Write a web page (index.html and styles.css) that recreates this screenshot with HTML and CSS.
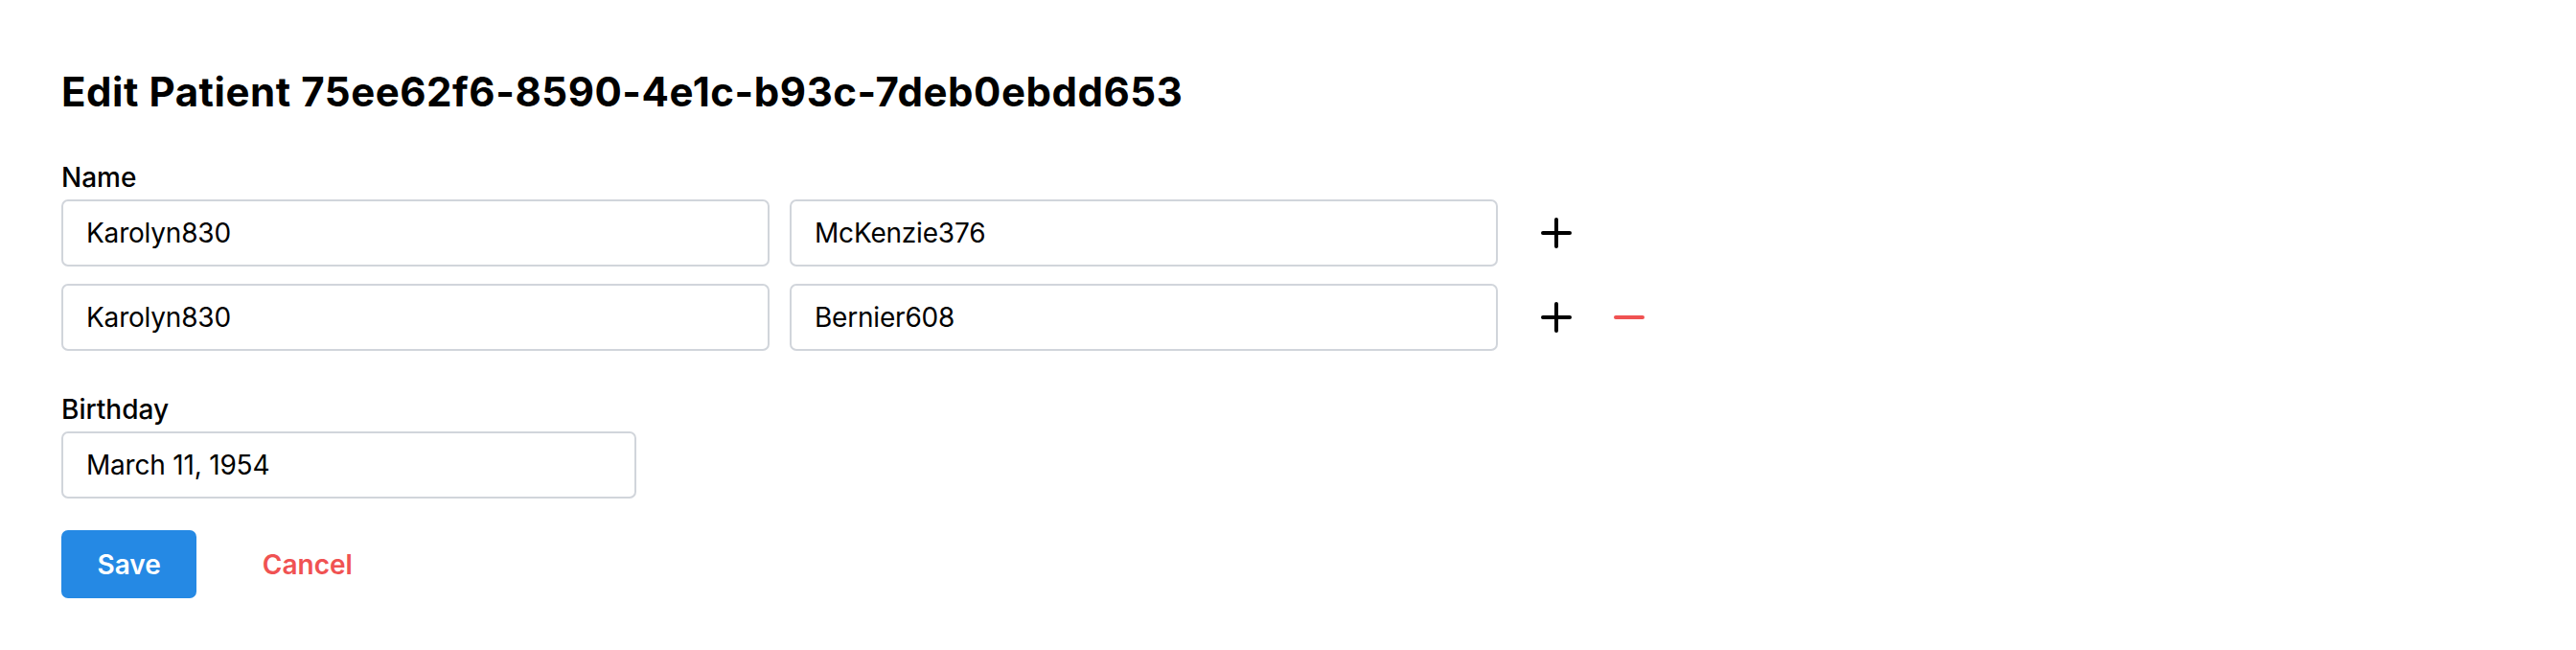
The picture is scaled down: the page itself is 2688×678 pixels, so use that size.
FILE: index.html
```html
<!DOCTYPE html>
<html lang="en">
<head>
<meta charset="utf-8">
<title>Edit Patient</title>
<link rel="stylesheet" href="styles.css">
</head>
<body>
<main class="page">
  <h1 class="title">Edit Patient 75ee62f6-8590-4e1c-b93c-7deb0ebdd653</h1>
  <form class="form">
    <section class="field">
      <label class="label">Name</label>
      <div class="name-rows">
        <div class="name-row">
          <input class="input name-input" type="text" value="Karolyn830">
          <input class="input name-input" type="text" value="McKenzie376">
          <div class="row-actions">
            <button type="button" class="icon-btn plus" aria-label="Add name">
              <svg viewBox="0 0 32 32" width="32" height="32"><path d="M16 2v28M2 16h28" stroke="#000" stroke-width="4" stroke-linecap="round" fill="none"/></svg>
            </button>
          </div>
        </div>
        <div class="name-row">
          <input class="input name-input" type="text" value="Karolyn830">
          <input class="input name-input" type="text" value="Bernier608">
          <div class="row-actions">
            <button type="button" class="icon-btn plus" aria-label="Add name">
              <svg viewBox="0 0 32 32" width="32" height="32"><path d="M16 2v28M2 16h28" stroke="#000" stroke-width="4" stroke-linecap="round" fill="none"/></svg>
            </button>
            <button type="button" class="icon-btn minus" aria-label="Remove name">
              <svg viewBox="0 0 32 32" width="32" height="32"><path d="M2 16h28" stroke="#f05252" stroke-width="4" stroke-linecap="round" fill="none"/></svg>
            </button>
          </div>
        </div>
      </div>
    </section>
    <section class="field birthday">
      <label class="label">Birthday</label>
      <input class="input date-input" type="text" value="March 11, 1954">
    </section>
    <div class="actions">
      <button type="button" class="btn save">Save</button>
      <button type="button" class="btn cancel">Cancel</button>
    </div>
  </form>
</main>
</body>
</html>
```
FILE: styles.css
```css
* { box-sizing: border-box; }
html, body { margin: 0; background: #fff; }
body {
  font-family: Inter, "Noto Sans", "Liberation Sans", sans-serif;
  color: #000;
}
.page {
  padding: 70px 64px 0 64px;
}
.title {
  margin: 0;
  font-size: 42px;
  line-height: 52px;
  font-weight: 700;
  letter-spacing: 0.55px;
}
.form {
  display: flex;
  flex-direction: column;
  margin-top: 43px;
}
.field {
  display: flex;
  flex-direction: column;
}
.label {
  font-size: 28px;
  line-height: 40px;
  font-weight: 500;
  margin-bottom: 3px;
}
.name-rows {
  display: flex;
  flex-direction: column;
  gap: 18px;
}
.name-row {
  display: flex;
  align-items: center;
  gap: 21px;
}
.input {
  height: 70px;
  border: 2px solid #d1d5db;
  border-radius: 7px;
  padding: 0 24px;
  font-family: inherit;
  font-size: 28px;
  letter-spacing: -0.2px;
  color: #000;
  background: #fff;
  outline: none;
}
.name-input { width: 739px; }
.date-input { width: 600px; }
.row-actions {
  display: flex;
  align-items: center;
  gap: 44px;
  margin-left: 24px;
}
.icon-btn {
  width: 32px;
  height: 32px;
  padding: 0;
  border: none;
  background: none;
  display: flex;
}
.birthday { margin-top: 41px; }
.actions {
  display: flex;
  align-items: center;
  gap: 31px;
  margin-top: 33px;
}
.btn {
  height: 71px;
  padding: 0 37.5px;
  border: none;
  border-radius: 7px;
  font-family: inherit;
  font-size: 28px;
  font-weight: 600;
  background: none;
}
.save {
  background: #2589e4;
  color: #fff;
}
.cancel {
  color: #f05252;
}
```
